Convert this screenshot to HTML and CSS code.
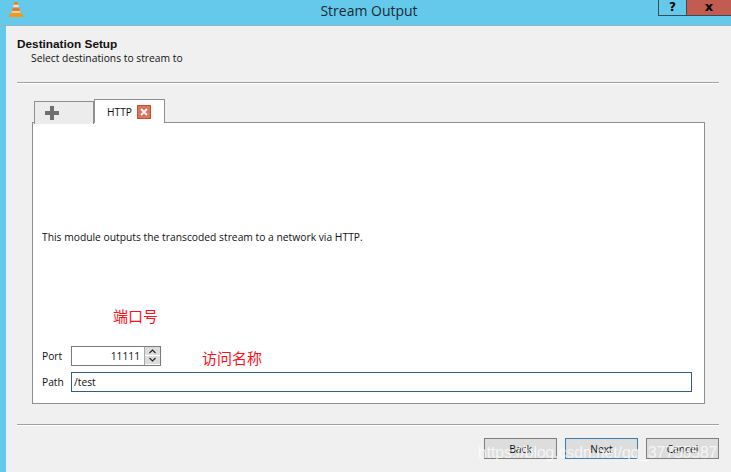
FILE: index.html
```html
<!DOCTYPE html>
<html lang="en">
<head>
<meta charset="utf-8">
<title>Stream Output</title>
<link rel="stylesheet" href="styles.css">
</head>
<body>
<div class="window">
  <header class="titlebar">
    <svg class="cone" width="16" height="17" viewBox="0 0 16 18">
      <path d="M6.500 1h3l1 3h-5z" fill="#f07c10"/>
      <path d="M5.500 4h5l.8 3H4.700z" fill="#e4e4e4"/>
      <path d="M4.700 7h6.600l1 3.500H3.700z" fill="#f07c10"/>
      <path d="M3.700 10.500h8.600l.7 2.500H3z" fill="#d8d8d8"/>
      <path d="M3 12.500h10l2.500 2.500v2H.5v-2z" fill="#f59a16"/>
    </svg>
    <h1 class="title">Stream Output</h1>
    <div class="controls">
      <div class="ctl help">?</div>
      <div class="ctl close">x</div>
    </div>
  </header>
  <div class="body">
    <main class="content">
      <div class="heading">
        <div class="h-title">Destination Setup</div>
        <div class="h-sub">Select destinations to stream to</div>
      </div>
      <hr class="rule rule-top">
      <div class="tabs">
        <div class="tab tab-add">
          <svg width="14" height="14" viewBox="0 0 14 14"><path d="M5 0h4v5h5v4H9v5H5V9H0V5h5z" fill="#6f6f6f"/></svg>
        </div>
        <div class="tab tab-active">
          <span>HTTP</span>
          <span class="tab-x">
            <svg width="8" height="8" viewBox="0 0 8 8"><path d="M1 1l6 6M7 1l-6 6" stroke="#fff" stroke-width="2"/></svg>
          </span>
        </div>
      </div>
      <section class="panel">
        <p class="desc">This module outputs the transcoded stream to a network via HTTP.</p>
        <div class="note note-port">端口号</div>
        <div class="fields">
          <div class="row">
            <label class="lbl">Port</label>
            <div class="spin">
              <span class="spin-val">11111</span>
              <span class="spin-btns">
                <span class="spin-btn"><svg width="9" height="6" viewBox="0 0 9 6"><path d="M1.500 5l3-3 3 3" fill="none" stroke="#222" stroke-width="1.100"/></svg></span>
                <span class="spin-btn"><svg width="9" height="6" viewBox="0 0 9 6"><path d="M1.500 1l3 3 3-3" fill="none" stroke="#222" stroke-width="1.100"/></svg></span>
              </span>
            </div>
            <span class="note note-path">访问名称</span>
          </div>
          <div class="row">
            <label class="lbl">Path</label>
            <div class="path">/test</div>
          </div>
        </div>
      </section>
      <hr class="rule rule-bottom">
      <footer class="actions">
        <div class="btn">Back</div>
        <div class="btn btn-default">Next</div>
        <div class="btn">Cancel</div>
      </footer>
    </main>
  </div>
  <div class="watermark">https://blog.csdn.net/qq_37755587</div>
</div>
</body>
</html>
```
FILE: styles.css
```css
* { box-sizing: border-box; }
html, body { margin: 0; padding: 0; }
body { width: 731px; height: 472px; overflow: hidden; font-family: "Open Sans", "Liberation Sans", sans-serif; }
.window { position: relative; width: 731px; height: 472px; background: #65c9ec; display: flex; flex-direction: column; }
.titlebar { height: 25px; flex: none; display: flex; position: relative; justify-content: center; }
.cone { position: absolute; left: 8px; top: 1px; }
.title { margin: 0; font-weight: 400; font-size: 14px; line-height: 22px; color: #1c2a33; font-family: "Open Sans", sans-serif; padding-left: 7px; }
.controls { position: absolute; left: 658px; top: 0; display: flex; }
.ctl { height: 16px; font-family: "DejaVu Sans", sans-serif; font-weight: 700; font-size: 12px; line-height: 14px; text-align: center; color: #000; }
.help { width: 29px; border: 1px solid #3d4a50; border-top: 0; }
.close { width: 73px; padding-right: 29px; background: #c25b50; border-bottom: 1px solid #3d4a50; font-size: 13px; }
.body { flex: 1; padding-left: 6px; border-top: 1px solid #8fb4c4; min-height: 0; }
.content { height: 100%; background: #f0f0f0; padding: 12px 12px 0 11px; font-size: 10px; color: #111; display: flex; flex-direction: column; }
.heading { height: 40px; }
.h-title { font-family: "Liberation Sans", sans-serif; font-weight: 700; font-size: 11.800px; line-height: 13px; }
.h-sub { font-size: 10.300px; line-height: 15px; padding-left: 14px; }
.rule { margin: 0; border: 0; height: 2px; background: linear-gradient(#a0a0a0 1px, #fff 1px); flex: none; }
.rule-top { margin-bottom: 15px; margin-top: 4px; }
.tabs { display: flex; padding-left: 17px; height: 24px; flex: none; position: relative; z-index: 1; }
.tab { background: #ececec; border: 1px solid #8f8f93; border-bottom: 0; }
.tab-add { width: 60px; height: 23px; margin-top: 2px; display: flex; align-items: center; padding-left: 10px; }
.tab-active { width: 71px; height: 24px; background: #fff; display: flex; align-items: center; gap: 5px; padding-left: 12px; font-size: 10.250px; }
.tab-x { width: 14px; height: 14px; background: #e2735a; border: 1px solid #c2513c; display: flex; align-items: center; justify-content: center; }
.panel { height: 282px; margin-left: 15px; margin-top: -1px; width: 673px; background: #fff; border: 1px solid #8f8f93; display: flex; flex-direction: column; padding: 0 12px 0 10px; }
.desc { margin: 107px 0 0 -1px; font-size: 10.300px; line-height: 15px; }
.note { color: #ff0f1c; font-family: "Noto Sans CJK SC", sans-serif; font-size: 15px; font-weight: 400; line-height: 20px; }
.note-port { margin: 61px 0 0 70px; }
.fields { margin-top: 20px; display: flex; flex-direction: column; gap: 7px; }
.row { display: flex; align-items: center; height: 19px; }
.lbl { width: 28px; flex: none; margin-left: -1px; margin-right: 1px; font-size: 10.250px; }
.spin { width: 90px; height: 20px; border: 1px solid #7a7a7a; background: #fff; display: flex; flex: none; }
.spin-val { flex: 1; text-align: right; padding-right: 4px; font-size: 10.250px; line-height: 18px; }
.spin-btns { width: 16px; display: flex; flex-direction: column; background: #dcdcdc; border-left: 1px solid #a8a8a8; }
.spin-btn { flex: 1; display: flex; align-items: center; justify-content: center; border-bottom: 1px solid #fff; }
.note-path { margin-left: 41px; margin-top: 5px; }
.path { flex: 1; height: 20px; border: 1px solid #2f5f86; background: #fff; padding-left: 2px; font-size: 10.250px; line-height: 18px; }
.rule-bottom { margin-top: 20px; }
.actions { display: flex; justify-content: flex-end; gap: 8px; margin-top: 12px; }
.btn { width: 73px; height: 21px; background: #dddddd; border: 1px solid #7d7d7d; text-align: center; font-size: 10.250px; line-height: 20px; }
.btn-default { border-color: #3f7bab; }
.watermark { position: absolute; left: 478px; top: 443px; font-family: "Liberation Sans", sans-serif; font-size: 15.600px; line-height: 20px; color: rgba(255,255,255,.72); white-space: nowrap; }
```
